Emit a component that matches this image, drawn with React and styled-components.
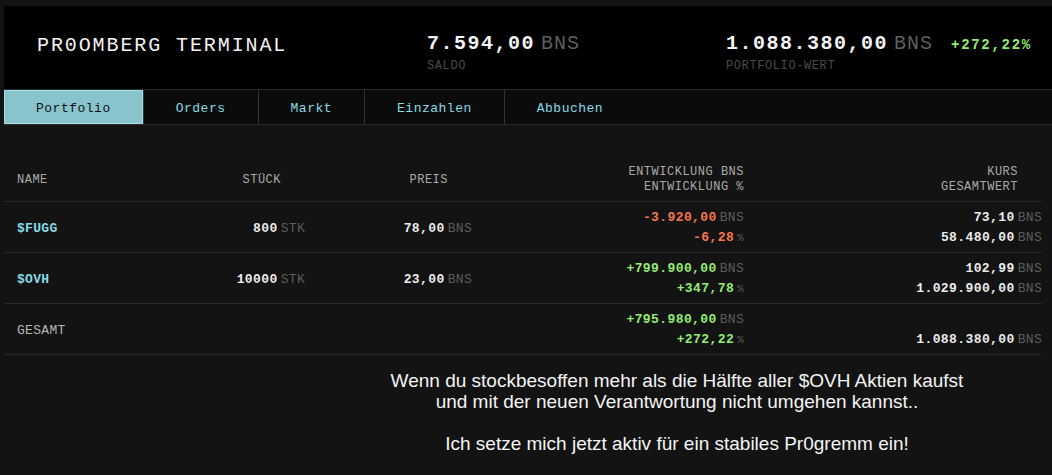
import React from 'react';
import styled, { createGlobalStyle } from 'styled-components';

const PAGE = '#131313';
const LINE = '#2a2a2a';
const MONO = "'Liberation Mono', 'Courier New', monospace";
const CYAN = '#86dbe4';
const GREEN = '#93ec74';
const RED = '#f7764c';
const UNIT = '#5c5c5c';

const GlobalStyle = createGlobalStyle`
  html, body {
    margin: 0;
    background: ${PAGE};
    height: 100%;
  }
  body {
    font-family: ${MONO};
    color: #e8e8e8;
  }
`;

const Shell = styled.div`
  padding: 6px 0 0 4px;
  min-height: 469px;
  box-sizing: border-box;
`;

const Header = styled.header`
  display: grid;
  grid-template-columns: 390px 299px auto;
  align-items: start;
  height: 84px;
  padding: 26px 0 0 33px;
  box-sizing: border-box;
  background: #000;
  border-bottom: 1px solid ${LINE};
`;

const Title = styled.h1`
  margin: 0;
  padding-top: 2px;
  font-family: ${MONO};
  font-size: 20px;
  font-weight: 400;
  letter-spacing: 1.9px;
  color: #f2f2f2;
`;

const Stat = styled.div`
  display: flex;
  flex-direction: column;
  gap: 4px;
`;

const StatLine = styled.div`
  display: flex;
  align-items: baseline;
`;

const BigNum = styled.span`
  font-size: 20px;
  font-weight: 700;
  letter-spacing: 1.5px;
  color: #f4f4f4;
`;

const BigUnit = styled.span`
  margin-left: 6px;
  font-size: 20px;
  letter-spacing: 1px;
  color: #5e5e5e;
`;

const Change = styled.span`
  margin-left: 18px;
  font-size: 14px;
  font-weight: 700;
  letter-spacing: 1.7px;
  color: ${GREEN};
`;

const StatLabel = styled.span`
  font-size: 12px;
  letter-spacing: 0.6px;
  color: #4a4a4a;
`;

const Nav = styled.nav`
  display: flex;
  height: 34px;
  background: #0b0b0b;
  border-bottom: 1px solid ${LINE};
`;

const Tab = styled.button`
  padding: 2px 32px 0;
  height: 100%;
  font-family: ${MONO};
  font-size: 13px;
  letter-spacing: 0.5px;
  border: none;
  border-right: 1px solid ${({ $last }) => ($last ? 'transparent' : '#333')};
  background: ${({ $active }) => ($active ? '#87c4cc' : 'transparent')};
  color: ${({ $active }) => ($active ? '#111' : CYAN)};
  box-shadow: ${({ $active }) => ($active ? 'inset 0 0 0 1px #a6dde4' : 'none')};
  cursor: pointer;
`;

const Content = styled.main`
  padding: 21px 10px 0 0;
`;

const Table = styled.table`
  width: 100%;
  border-collapse: collapse;
`;

const Th = styled.th`
  height: 42px;
  padding: 13px ${({ $pr }) => $pr ?? 0}px 0 ${({ $pl }) => $pl ?? 0}px;
  text-align: ${({ $align }) => $align || 'right'};
  font-size: 12px;
  font-weight: 400;
  letter-spacing: 0.5px;
  line-height: 15px;
  color: #a9a9a9;
  border-bottom: 1px solid ${LINE};
  vertical-align: middle;
`;

const Td = styled.td`
  height: 48px;
  padding: 2px ${({ $pr }) => $pr ?? 0}px 0 ${({ $pl }) => $pl ?? 0}px;
  text-align: ${({ $align }) => $align || 'right'};
  border-bottom: 1px solid ${LINE};
  vertical-align: middle;
`;

const Ticker = styled.span`
  font-size: 13px;
  letter-spacing: 0.3px;
  color: ${({ $plain }) => ($plain ? '#b5b5b5' : CYAN)};
  font-weight: ${({ $plain }) => ($plain ? 400 : 700)};
`;

const Cell = styled.div`
  display: flex;
  flex-direction: column;
  align-items: flex-end;
  gap: 2px;
`;

const Value = styled.span`
  display: inline-flex;
  align-items: baseline;
  font-size: 13px;
  line-height: 18px;
`;

const Num = styled.span`
  font-weight: 700;
  letter-spacing: 0.4px;
  color: ${({ $tone }) => ($tone === 'up' ? GREEN : $tone === 'down' ? RED : '#ececec')};
`;

const Unit = styled.span`
  margin-left: 3px;
  letter-spacing: 0.3px;
  color: ${UNIT};
  font-size: ${({ $small }) => ($small ? '11px' : '13px')};
`;

const Blank = styled.span`
  height: 18px;
`;

const Caption = styled.p`
  margin: 15px 0 0;
  padding-left: 308px;
  text-align: center;
  font-family: 'Liberation Sans', Arial, sans-serif;
  font-size: 19px;
  line-height: 21px;
  color: #f4f4f4;
  white-space: pre-line;
`;

const V = ({ n, u = 'BNS', tone }) => (
  <Value>
    <Num $tone={tone}>{n}</Num>
    <Unit $small={u === '%'}>{u}</Unit>
  </Value>
);

const rows = [
  {
    name: '$FUGG', qty: '800', price: '78,00',
    dev: '-3.920,00', pct: '-6,28', tone: 'down',
    kurs: '73,10', total: '58.480,00',
  },
  {
    name: '$OVH', qty: '10000', price: '23,00',
    dev: '+799.900,00', pct: '+347,78', tone: 'up',
    kurs: '102,99', total: '1.029.900,00',
  },
];

const tabs = ['Portfolio', 'Orders', 'Markt', 'Einzahlen', 'Abbuchen'];

export default function App() {
  return (
    <Shell>
      <GlobalStyle />
      <Header>
        <Title>PR0OMBERG TERMINAL</Title>
        <Stat>
          <StatLine>
            <BigNum>7.594,00</BigNum>
            <BigUnit>BNS</BigUnit>
          </StatLine>
          <StatLabel>SALDO</StatLabel>
        </Stat>
        <Stat>
          <StatLine>
            <BigNum>1.088.380,00</BigNum>
            <BigUnit>BNS</BigUnit>
            <Change>+272,22%</Change>
          </StatLine>
          <StatLabel>PORTFOLIO-WERT</StatLabel>
        </Stat>
      </Header>

      <Nav>
        {tabs.map((t, i) => (
          <Tab key={t} $active={i === 0} $last={i === tabs.length - 1}>
            {t}
          </Tab>
        ))}
      </Nav>

      <Content>
        <Table>
          <colgroup>
            <col style={{ width: 180 }} />
            <col style={{ width: 121 }} />
            <col style={{ width: 167 }} />
            <col style={{ width: 272 }} />
            <col />
          </colgroup>
          <thead>
            <tr>
              <Th $align="left" $pl={13}>NAME</Th>
              <Th $pr={24}>STÜCK</Th>
              <Th $pr={24}>PREIS</Th>
              <Th>ENTWICKLUNG BNS<br />ENTWICKLUNG %</Th>
              <Th $pr={24}>KURS<br />GESAMTWERT</Th>
            </tr>
          </thead>
          <tbody>
            {rows.map((r) => (
              <tr key={r.name}>
                <Td $align="left" $pl={13}><Ticker>{r.name}</Ticker></Td>
                <Td><V n={r.qty} u="STK" /></Td>
                <Td><V n={r.price} /></Td>
                <Td>
                  <Cell>
                    <V n={r.dev} tone={r.tone} />
                    <V n={r.pct} u="%" tone={r.tone} />
                  </Cell>
                </Td>
                <Td>
                  <Cell>
                    <V n={r.kurs} />
                    <V n={r.total} />
                  </Cell>
                </Td>
              </tr>
            ))}
            <tr>
              <Td $align="left" $pl={13}><Ticker $plain>GESAMT</Ticker></Td>
              <Td />
              <Td />
              <Td>
                <Cell>
                  <V n="+795.980,00" tone="up" />
                  <V n="+272,22" u="%" tone="up" />
                </Cell>
              </Td>
              <Td>
                <Cell>
                  <Blank />
                  <V n="1.088.380,00" />
                </Cell>
              </Td>
            </tr>
          </tbody>
        </Table>

        <Caption>
          {'Wenn du stockbesoffen mehr als die Hälfte aller $OVH Aktien kaufst\nund mit der neuen Verantwortung nicht umgehen kannst..\n\nIch setze mich jetzt aktiv für ein stabiles Pr0gremm ein!'}
        </Caption>
      </Content>
    </Shell>
  );
}
